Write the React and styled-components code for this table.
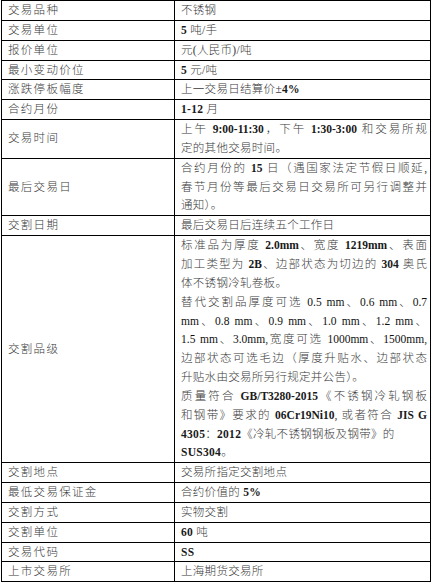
import React from "react";
import styled, { createGlobalStyle } from "styled-components";

const Global = createGlobalStyle`
  html, body {
    margin: 0;
    padding: 0;
    background: #ffffff;
  }
`;

const Page = styled.div`
  padding: 0 1px 0 1px;
  width: 431px;
  font-family: "Liberation Serif", "Noto Sans CJK SC", serif;
  font-size: 11.5px;
  color: #3a3a3a;
`;

const Table = styled.table`
  width: 430px;
  border-collapse: collapse;
  table-layout: fixed;
`;

const Row = styled.tr``;

const Label = styled.td`
  width: 173px;
  padding: 0 0 0 6px;
  border: 1px solid #000;
  line-height: 18.85px;
  letter-spacing: 1.3px;
  vertical-align: middle;
  white-space: nowrap;
  font-weight: 300;
`;

const Value = styled.td`
  padding: 0 3px 0 6px;
  border: 1px solid #000;
  line-height: 18.85px;
  vertical-align: top;
  font-weight: 300;
`;

const Line = styled.span`
  display: block;
  white-space: nowrap;
  letter-spacing: ${(p) => (p.$full ? "0" : "0.3px")};
  text-align: ${(p) => (p.$full ? "justify" : "left")};
  text-align-last: ${(p) => (p.$full ? "justify" : "auto")};
`;

const B = styled.b`
  font-weight: 700;
  color: #1a1a1a;
`;

const N = styled.span`
  color: #111;
`;

const rows = [
  ["交易品种", [["不锈钢"]]],
  ["交易单位", [[<><B>5</B> 吨/手</>]]],
  ["报价单位", [["元(人民币)/吨"]]],
  ["最小变动价位", [[<><B>5</B> 元/吨</>]]],
  ["涨跌停板幅度", [[<>上一交易日结算价±<B>4%</B></>]]],
  ["合约月份", [[<><B>1-12</B> 月</>]]],
  [
    "交易时间",
    [
      [<>上午 <B>9:00-11:30</B>，下午 <B>1:30-3:00</B> 和交易所规</>, true],
      ["定的其他交易时间。"],
    ],
  ],
  [
    "最后交易日",
    [
      [<>合约月份的 <B>15</B> 日（遇国家法定节假日顺延,</>, true],
      ["春节月份等最后交易日交易所可另行调整并", true],
      ["通知）。"],
    ],
  ],
  ["交割日期", [["最后交易日后连续五个工作日"]]],
  [
    "交割品级",
    [
      [<>标准品为厚度 <B>2.0mm</B>、宽度 <B>1219mm</B>、表面</>, true],
      [<>加工类型为 <B>2B</B>、边部状态为切边的 <B>304</B> 奥氏</>, true],
      ["体不锈钢冷轧卷板。"],
      [<>替代交割品厚度可选 <N>0.5 mm</N>、<N>0.6 mm</N>、<N>0.7</N></>, true],
      [<><N>mm</N>、<N>0.8 mm</N>、<N>0.9 mm</N>、<N>1.0 mm</N>、<N>1.2 mm</N>、</>, true],
      [<><N>1.5 mm</N>、<N>3.0mm</N>,宽度可选 <N>1000mm</N>、<N>1500mm</N>,</>, true],
      ["边部状态可选毛边（厚度升贴水、边部状态", true],
      ["升贴水由交易所另行规定并公告）。"],
      [<>质量符合 <B>GB/T3280-2015</B>《不锈钢冷轧钢板</>, true],
      [<>和钢带》要求的 <B>06Cr19Ni10</B>, 或者符合 <B>JIS G</B></>, true],
      [<><B>4305</B>：<B>2012</B>《冷轧不锈钢钢板及钢带》的</>],
      [<><B>SUS304</B>。</>],
    ],
  ],
  ["交割地点", [["交易所指定交割地点"]]],
  ["最低交易保证金", [[<>合约价值的 <B>5%</B></>]]],
  ["交割方式", [["实物交割"]]],
  ["交割单位", [[<><B>60</B> 吨</>]]],
  ["交易代码", [[<B>SS</B>]]],
  ["上市交易所", [["上海期货交易所"]]],
];

export default function App() {
  return (
    <Page>
      <Global />
      <Table>
        <colgroup>
          <col style={{ width: 173 }} />
          <col />
        </colgroup>
        <tbody>
          {rows.map(([label, lines]) => (
            <Row key={label}>
              <Label>{label}</Label>
              <Value>
                {lines.map(([text, full], i) => (
                  <Line key={i} $full={full}>
                    {text}
                  </Line>
                ))}
              </Value>
            </Row>
          ))}
        </tbody>
      </Table>
    </Page>
  );
}
